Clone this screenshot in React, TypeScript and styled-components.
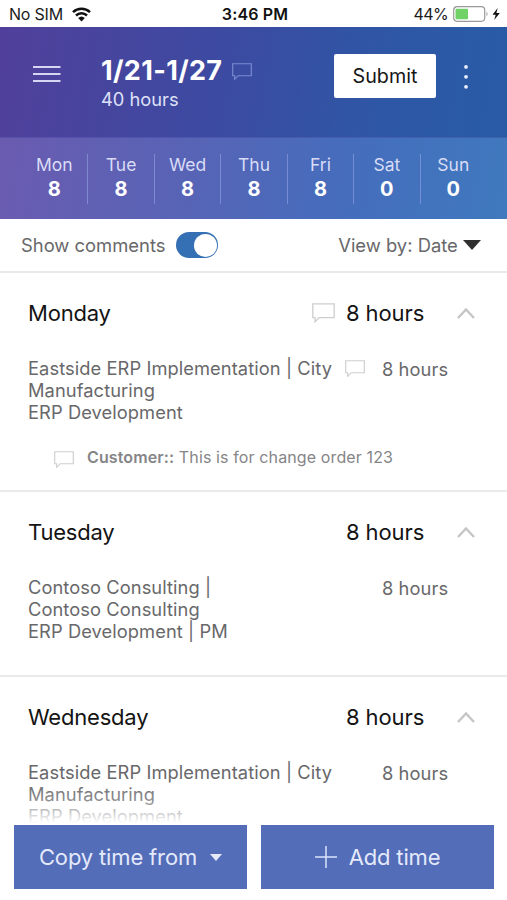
import React from "react";
import styled, { createGlobalStyle } from "styled-components";

const GlobalStyle = createGlobalStyle`
  *, *::before, *::after { box-sizing: border-box; }
  body { margin: 0; background: #fff; font-family: Inter, sans-serif; }
  button { font-family: inherit; border: 0; margin: 0; padding: 0; background: none; cursor: pointer; }
  svg { display: block; flex: none; }
`;

const Screen = styled.main`
  position: relative;
  width: 507px;
  height: 900px;
  overflow: hidden;
  background: #fff;
  color: #68686a;
`;

const StatusBar = styled.div`
  height: 27px;
  padding: 1px 6px 0 9px;
  display: grid;
  grid-template-columns: 1fr auto 1fr;
  align-items: center;
  font-size: 16px;
  line-height: 24px;
  color: #1c1c1c;
`;

const StatusGroup = styled.div<{ $end?: boolean }>`
  display: flex;
  align-items: center;
  gap: ${(p) => (p.$end ? "5px" : "9px")};
  justify-content: ${(p) => (p.$end ? "flex-end" : "flex-start")};
  letter-spacing: ${(p) => (p.$end ? "-0.6px" : "-0.2px")};
`;

const Clock = styled.strong`
  font-weight: 600;
  letter-spacing: 0.15px;
  color: #111;
`;

const Header = styled.header`
  height: 111px;
  display: flex;
  align-items: flex-start;
  padding: 27px 33px 0;
  background: linear-gradient(100deg, #51409b 0%, #3d4aa1 42%, #2e57a5 75%, #285ba6 100%);
  border-bottom: 1px solid rgba(105, 110, 195, 0.35);
`;

const IconButton = styled.button`
  display: flex;
  margin-top: 11px;
`;

const Period = styled.div`
  flex: 1;
  margin-left: 40px;
`;

const PeriodTitle = styled.h1`
  margin: 0;
  display: flex;
  align-items: center;
  gap: 10px;
  font-size: 27px;
  line-height: 34px;
  font-weight: 700;
  color: #fff;
  letter-spacing: 0.35px;
`;

const PeriodTotal = styled.div`
  font-size: 18.3px;
  line-height: 23px;
  color: #dfe1f8;
`;

const SubmitButton = styled.button`
  width: 102px;
  height: 44px;
  margin-right: 28px;
  border-radius: 2px;
  background: #fff;
  color: #161616;
  font-size: 19.7px;
`;

const Week = styled.div`
  height: 81px;
  padding: 16px 21px 15px;
  display: grid;
  grid-template-columns: repeat(7, 1fr);
  background: linear-gradient(100deg, #6a5bb0 0%, #5764b6 38%, #456dbc 68%, #3f79be 100%);
`;

const Day = styled.div`
  display: flex;
  flex-direction: column;
  align-items: center;
  color: #d9dcf6;
  font-size: 17.5px;
  line-height: 22px;
  & + & { border-left: 1px solid rgba(145, 158, 224, 0.65); }
`;

const DayTotal = styled.strong`
  color: #fff;
  font-size: 20px;
  font-weight: 700;
  line-height: 26px;
`;

const Options = styled.div`
  height: 54px;
  padding: 0 26px 0 21px;
  display: flex;
  align-items: center;
  justify-content: space-between;
  border-bottom: 2px solid #e9e9e9;
  font-size: 18.4px;
  line-height: 24px;
`;

const OptionGroup = styled.div`
  display: flex;
  align-items: center;
`;

const Switch = styled.span`
  width: 42px;
  height: 26px;
  margin-left: 11px;
  padding: 1.5px 1.5px;
  display: flex;
  justify-content: flex-end;
  border-radius: 13px;
  background: #3470b3;
`;

const Knob = styled.span`
  width: 23px;
  height: 23px;
  border-radius: 50%;
  background: #fff;
`;

const DaySection = styled.section<{ $height: number }>`
  height: ${(p) => p.$height}px;
  padding: 22px 32px 0 28px;
  border-bottom: 2px solid #eaeaea;
`;

const SectionHeader = styled.div`
  height: 36px;
  display: flex;
  align-items: center;
  color: #141414;
`;

const SectionTitle = styled.h2`
  margin: 0;
  flex: 1;
  font-size: 22px;
  font-weight: 400;
  line-height: 30px;
  letter-spacing: -0.2px;
`;

const SectionHours = styled.div`
  width: 78px;
  margin: 0 33px 0 11px;
  font-size: 22px;
  line-height: 30px;
  letter-spacing: -0.1px;
  white-space: nowrap;
`;

const Entry = styled.div`
  margin-top: 26px;
  display: grid;
  grid-template-columns: 317px 37px auto;
  font-size: 18.3px;
  letter-spacing: 0.08px;
  line-height: 22px;
`;

const EntryName = styled.div`
  white-space: pre-line;
`;

const EntryHours = styled.div`
  padding-top: 1px;
`;

const EntryIcon = styled.div`
  padding-top: 3px;
`;

const Note = styled.div`
  margin: 24px 0 0 26px;
  display: flex;
  gap: 13px;
  font-size: 16px;
  letter-spacing: 0.12px;
  line-height: 20px;
  color: #858587;
  white-space: nowrap;
  svg { margin-top: 4px; }
`;

const Label = styled.strong`
  font-weight: 600;
`;

const Actions = styled.footer`
  position: absolute;
  left: 0;
  right: 0;
  bottom: 0;
  height: 120px;
  padding: 45px 13px 11px 14px;
  display: grid;
  grid-template-columns: 233px 233px;
  justify-content: space-between;
  background: linear-gradient(to bottom, rgba(255, 255, 255, 0) 0, rgba(255, 255, 255, 0.25) 20px, rgba(255, 255, 255, 0.7) 34px, #fff 43px);
`;

const ActionButton = styled.button<{ $gap: number }>`
  display: flex;
  align-items: center;
  justify-content: center;
  gap: ${(p) => p.$gap}px;
  background: #536db8;
  color: #e4e9fb;
  font-size: 22px;
  letter-spacing: -0.15px;
`;

const Comment = ({ width, color = "#cecece" }: { width: number; color?: string }) => (
  <svg width={width} height={width * 0.85} viewBox="0 0 20 17" fill="none" stroke={color} strokeWidth="1.15">
    <path d="M.7.7h18.6v12H6.2l-3.5 3.6v-3.6h-2z" />
  </svg>
);

const Caret = ({ width, height, color }: { width: number; height: number; color: string }) => (
  <svg width={width} height={height} viewBox="0 0 18 10" preserveAspectRatio="none">
    <path d="M0 0h18L9 10z" fill={color} />
  </svg>
);

const Chevron = () => (
  <svg width="18" height="12" viewBox="0 0 18 12" fill="none" stroke="#c5c5c7" strokeWidth="2.4">
    <path d="m1 11 8-8.5 8 8.5" />
  </svg>
);

const days: [string, number][] = [
  ["Mon", 8], ["Tue", 8], ["Wed", 8], ["Thu", 8], ["Fri", 8], ["Sat", 0], ["Sun", 0],
];

const sections = [
  { day: "Monday", height: 219, name: "Eastside ERP Implementation | City\nManufacturing\nERP Development", note: "This is for change order 123" },
  { day: "Tuesday", height: 185, name: "Contoso Consulting |\nContoso Consulting\nERP Development | PM" },
  { day: "Wednesday", height: 218, name: "Eastside ERP Implementation | City\nManufacturing\nERP Development" },
];

export default function App() {
  return (
    <Screen>
      <GlobalStyle />
      <StatusBar>
        <StatusGroup>
          No SIM
          <svg width="19" height="15" viewBox="0 0 19 15" fill="none" stroke="#111" strokeWidth="2.5">
            <path d="M1 5.2a12.3 12.3 0 0 1 17 0M4 8.5a8 8 0 0 1 11 0" />
            <path d="M6.2 11.1a4.9 4.9 0 0 1 6.6 0L9.5 14.4z" fill="#111" stroke="none" />
          </svg>
        </StatusGroup>
        <Clock>3:46 PM</Clock>
        <StatusGroup $end>
          44%
          <svg width="48" height="16" viewBox="0 0 48 16">
            <rect x=".7" y=".7" width="31" height="14.6" rx="3.5" fill="#fff" stroke="#999" strokeWidth="1.2" />
            <rect x="2.5" y="2.7" width="12.5" height="10.6" rx="1" fill="#70d267" />
            <path d="M33.5 5.5q2 2.5 0 5z" fill="#999" />
            <path d="m44.7 2-5.2 6.7h3.2L41.2 14l5.6-7h-3.4z" fill="#111" />
          </svg>
        </StatusGroup>
      </StatusBar>
      <Header>
        <IconButton aria-label="Menu">
          <svg width="28" height="18" viewBox="0 0 28 18" stroke="#d6d6f3" strokeWidth="2">
            <path d="M0 2h27.5M0 9h27.5M0 16h27.5" />
          </svg>
        </IconButton>
        <Period>
          <PeriodTitle>1/21-1/27 <Comment width={20} color="#7c8bd1" /></PeriodTitle>
          <PeriodTotal>40 hours</PeriodTotal>
        </Period>
        <SubmitButton>Submit</SubmitButton>
        <IconButton aria-label="More">
          <svg width="10" height="24" viewBox="0 0 10 24" fill="#e8f0ff">
            <circle cx="2" cy="1.9" r="1.9" /><circle cx="2" cy="11.8" r="1.9" /><circle cx="2" cy="21.8" r="1.9" />
          </svg>
        </IconButton>
      </Header>
      <Week>
        {days.map(([name, total]) => (
          <Day key={name}>{name}<DayTotal>{total}</DayTotal></Day>
        ))}
      </Week>
      <Options>
        <OptionGroup>Show comments<Switch role="switch" aria-checked="true"><Knob /></Switch></OptionGroup>
        <OptionGroup>View by: Date&nbsp;<Caret width={18} height={10} color="#2f2f2f" /></OptionGroup>
      </Options>
      {sections.map((s) => (
        <DaySection key={s.day} $height={s.height}>
          <SectionHeader>
            <SectionTitle>{s.day}</SectionTitle>
            {s.note && <Comment width={23} />}
            <SectionHours>8 hours</SectionHours>
            <Chevron />
          </SectionHeader>
          <Entry>
            <EntryName>{s.name}</EntryName>
            <EntryIcon>{s.note && <Comment width={20} />}</EntryIcon>
            <EntryHours>8 hours</EntryHours>
          </Entry>
          {s.note && (
            <Note>
              <Comment width={20} />
              <span><Label>Customer::</Label> {s.note}</span>
            </Note>
          )}
        </DaySection>
      ))}
      <Actions>
        <ActionButton $gap={13}>Copy time from <Caret width={12} height={7} color="#e4e9fb" /></ActionButton>
        <ActionButton $gap={12}>
          <svg width="22" height="22" viewBox="0 0 22 22" stroke="#dbe3fc" strokeWidth="1.5">
            <path d="M11 0v22M0 11h22" />
          </svg>
          Add time
        </ActionButton>
      </Actions>
    </Screen>
  );
}
